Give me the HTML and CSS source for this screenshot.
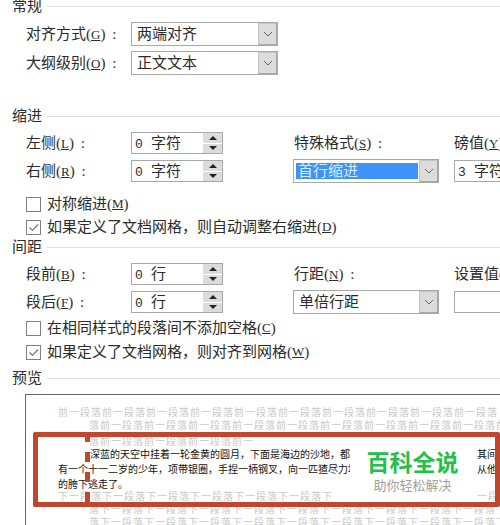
FILE: index.html
```html
<!DOCTYPE html>
<html lang="zh-CN">
<head>
    <meta charset="UTF-8">
    <title>段落</title>
    <link rel="stylesheet" href="styles.css">
</head>
<body>

    <div class="page">

        <div class="group-title"><span>常规</span><i></i></div>
        <div class="general">
            <label>对齐方式(<u>G</u>) :</label>
            <div class="select"><span class="value">两端对齐</span><span class="drop"><svg width="10" height="6" viewBox="0 0 10 6"><polyline points="1,1 5,5 9,1"/></svg></span></div>
            <label>大纲级别(<u>O</u>) :</label>
            <div class="select"><span class="value">正文文本</span><span class="drop"><svg width="10" height="6" viewBox="0 0 10 6"><polyline points="1,1 5,5 9,1"/></svg></span></div>
        </div>

        <div class="group-title indent-title"><span>缩进</span><i></i></div>
        <div class="fields">
            <label>左侧(<u>L</u>) :</label>
            <div class="spin"><span class="value"><b>0</b>字符</span><span class="arrows"><em class="up"></em><em class="down"></em></span></div>
            <label class="col-mid">特殊格式(<u>S</u>) :</label>
            <label class="col-end">磅值(<u>Y</u>) :</label>

            <label>右侧(<u>R</u>) :</label>
            <div class="spin"><span class="value"><b>0</b>字符</span><span class="arrows"><em class="up"></em><em class="down"></em></span></div>
            <div class="select col-mid"><span class="value selected">首行缩进</span><span class="drop"><svg width="10" height="6" viewBox="0 0 10 6"><polyline points="1,1 5,5 9,1"/></svg></span></div>
            <div class="spin col-end"><span class="value"><b>3</b>字符</span></div>
        </div>
        <div class="checks indent-checks">
            <div class="check"><span class="box"></span>对称缩进(<u>M</u>)</div>
            <div class="check"><span class="box"><svg width="13" height="13" viewBox="0 0 13 13"><polyline points="2.5,6.5 5.5,9.5 11,3.5"/></svg></span>如果定义了文档网格，则自动调整右缩进(<u>D</u>)</div>
        </div>

        <div class="group-title"><span>间距</span><i></i></div>
        <div class="fields">
            <label>段前(<u>B</u>) :</label>
            <div class="spin"><span class="value"><b>0</b>行</span><span class="arrows"><em class="up"></em><em class="down"></em></span></div>
            <label class="col-mid">行距(<u>N</u>) :</label>
            <label class="col-end">设置值(<u>A</u>) :</label>

            <label>段后(<u>F</u>) :</label>
            <div class="spin"><span class="value"><b>0</b>行</span><span class="arrows"><em class="up"></em><em class="down"></em></span></div>
            <div class="select col-mid"><span class="value">单倍行距</span><span class="drop"><svg width="10" height="6" viewBox="0 0 10 6"><polyline points="1,1 5,5 9,1"/></svg></span></div>
            <div class="spin col-end"><span class="value"></span></div>
        </div>
        <div class="checks spacing-checks">
            <div class="check"><span class="box"></span>在相同样式的段落间不添加空格(<u>C</u>)</div>
            <div class="check"><span class="box"><svg width="13" height="13" viewBox="0 0 13 13"><polyline points="2.5,6.5 5.5,9.5 11,3.5"/></svg></span>如果定义了文档网格，则对齐到网格(<u>W</u>)</div>
        </div>

        <div class="group-title preview-title"><span>预览</span><i></i></div>
        <div class="preview">
            <p class="ghost first">前一段落前一段落前一段落前一段落前一段落前一段落前一段落前一段落前一段落前一段落</p>
            <p class="ghost">落前一段落前一段落前一段落前一段落前一段落前一段落前一段落前一段落前一段落前</p>
            <p class="ghost third">落前一段落前一段落前一段落前一</p>
            <p class="sample first-line"><span class="left-part">深蓝的天空中挂着一轮金黄的圆月，下面是海边的沙地，都种</span><span>其间</span></p>
            <p class="sample"><span class="left-part">有一个十一二岁的少年，项带银圈，手捏一柄钢叉，向一匹猹尽力地</span><span>从他</span></p>
            <p class="sample">的胯下逃走了。</p>
            <p class="ghost first after"><span class="left-part">下一段落下一段落下一段落下一段落下一段落下一段落下</span><span>一段</span></p>
            <p class="ghost">落下一段落下一段落下一段落下一段落下一段落下一段落下一段落下一段落下一段落下</p>
            <p class="ghost">落下一段落下一段落下一段落下一段落下一段落下一段落下一段落下一段落下一段落下</p>
        </div>

    </div>

    <div class="mark">
        <div class="dash"></div>
        <div class="stamp">
            <strong>百科全说</strong>
            <span>助你轻松解决</span>
        </div>
    </div>

</body>
</html>
```

FILE: styles.css
```css
html, body {
    margin: 0;
    padding: 0;
    height: 525px;
    overflow: hidden;
    background: white;
}

body {
    position: relative;
    font-family: "Liberation Serif", "Noto Sans CJK SC", serif;
    font-size: 15px;
    color: #2b2b2b;
}

.page {
    margin-top: -4px;
}

label {
    display: block;
    white-space: nowrap;
    height: 22px;
    line-height: 22px;
    word-spacing: 3px;
}

u {
    font-size: 13px;
}

/* group headings with a rule running off to the right */
.group-title {
    display: flex;
    align-items: center;
    height: 20px;
    line-height: 20px;
    padding-left: 12px;
}

.group-title span {
    width: 35px;
    flex: none;
}

.group-title i {
    flex: 1;
    height: 1px;
    background: #e0e0e0;
}

.indent-title {
    margin-top: 31px;
}

.preview-title {
    margin-top: 6px;
}

.general {
    display: grid;
    grid-template-columns: 105px 147px;
    grid-template-rows: 24px 24px;
    row-gap: 5px;
    padding: 6px 0 0 26px;
}

.general label {
    height: 24px;
    line-height: 24px;
}

.fields {
    display: grid;
    grid-template-columns: 105px 92px 70px 146px 15px 46px;
    grid-template-rows: 22px 22px;
    row-gap: 6px;
    padding: 6px 0 0 26px;
    overflow-x: clip;
}

.col-mid {
    grid-column: 4;
}

.col-end {
    grid-column: 6;
}

label.col-mid {
    padding-left: 1px;
}

.select {
    display: flex;
    height: 24px;
    box-sizing: border-box;
    border: 1px solid #a8a8a8;
    background: white;
}

.fields .select {
    margin: -1px 0;
}

.select .value {
    flex: 1;
    padding-left: 5px;
    line-height: 22px;
}

.select .selected {
    margin: 3px 1px 3px 2px;
    padding-left: 2px;
    line-height: 16px;
    background: #3d94f6;
    color: #d8e9ff;
}

.drop {
    width: 19px;
    box-sizing: border-box;
    border: 1px solid #c4c4c4;
    border-right: 1px solid #a8a8a8;
    border-bottom: 1px solid #a8a8a8;
    background: #dcdcdc;
    display: flex;
    align-items: center;
    justify-content: center;
}

.drop svg polyline {
    fill: none;
    stroke: #666;
    stroke-width: 1;
}

.spin {
    display: flex;
    box-sizing: border-box;
    height: 22px;
    border: 1px solid #a8a8a8;
    background: white;
}

.spin.col-end {
    border-right: none;
}

.spin .value {
    flex: 1;
    min-width: 0;
    overflow: hidden;
    padding-left: 3px;
    line-height: 20px;
    white-space: nowrap;
}

.spin b {
    display: inline-block;
    width: 16px;
    font-family: "Liberation Mono", monospace;
    font-size: 13px;
    font-weight: normal;
}

.arrows {
    width: 19px;
    display: flex;
    flex-direction: column;
    gap: 1px;
}

.arrows em {
    flex: 1;
    background: #dcdcdc;
    display: flex;
    align-items: center;
    justify-content: center;
}

.arrows em::after {
    content: "";
    border-left: 4px solid transparent;
    border-right: 4px solid transparent;
}

.arrows .up::after {
    border-bottom: 4px solid #222;
}

.arrows .down::after {
    border-top: 4px solid #222;
}

.checks {
    padding-left: 26px;
    display: flex;
    flex-direction: column;
}

.indent-checks {
    margin-top: 12px;
    gap: 3px;
}

.spacing-checks {
    margin-top: 5px;
    gap: 4px;
}

.check {
    display: flex;
    align-items: center;
    height: 20px;
    line-height: 20px;
    white-space: pre;
}

.box {
    width: 15px;
    height: 15px;
    box-sizing: border-box;
    border: 1px solid #808080;
    margin-right: 6px;
    display: flex;
    align-items: center;
    justify-content: center;
}

.box svg polyline {
    fill: none;
    stroke: #777;
    stroke-width: 1.2;
}

.preview {
    margin: 6px 0 0 25px;
    height: 131px;
    box-sizing: border-box;
    border-top: 1px solid #666;
    border-left: 1px solid #666;
    padding: 11px 0 0 32px;
    overflow: hidden;
}

.preview p {
    margin: 0;
    height: 13px;
    white-space: nowrap;
}

.ghost {
    font-size: 10px;
    letter-spacing: 1px;
    line-height: 13px;
    color: #c8c8c8;
    padding-left: 31px;
}

.preview .ghost.first {
    padding-left: 0;
}

.preview .ghost.third {
    margin-top: 3px;
}

.preview .ghost.after {
    margin-top: -2px;
}

.preview .sample {
    height: 15px;
    font-size: 10px;
    line-height: 15px;
    color: #111;
}

.preview .sample.first-line {
    margin-top: -1px;
    padding-left: 32px;
}

/* text that the stamp hides in the screenshot stops at its left edge */
.left-part {
    display: inline-block;
    width: 419px;
    overflow: hidden;
    vertical-align: top;
}

.first-line .left-part {
    width: 387px;
}

/* red annotation drawn on top of the dialog screenshot */
.mark {
    position: absolute;
    left: 33px;
    top: 432px;
    width: 467px;
    height: 75px;
    box-sizing: border-box;
    border: 5px solid #c0462f;
    border-radius: 2px;
}

.dash {
    position: absolute;
    left: 47px;
    top: 0;
    bottom: 0;
    width: 5px;
    background: repeating-linear-gradient(to bottom, #c0462f 0 5px, transparent 5px 15px, #c0462f 15px 20px);
}

.stamp {
    position: absolute;
    left: 312px;
    top: 0;
    width: 125px;
    height: 65px;
    background: white;
    display: flex;
    flex-direction: column;
    align-items: center;
}

.stamp strong {
    font-size: 23px;
    line-height: 30px;
    margin-top: 12px;
    color: #22c04a;
}

.stamp span {
    font-size: 13px;
    line-height: 16px;
    margin-top: -1px;
    color: #a0a0a0;
}
```
